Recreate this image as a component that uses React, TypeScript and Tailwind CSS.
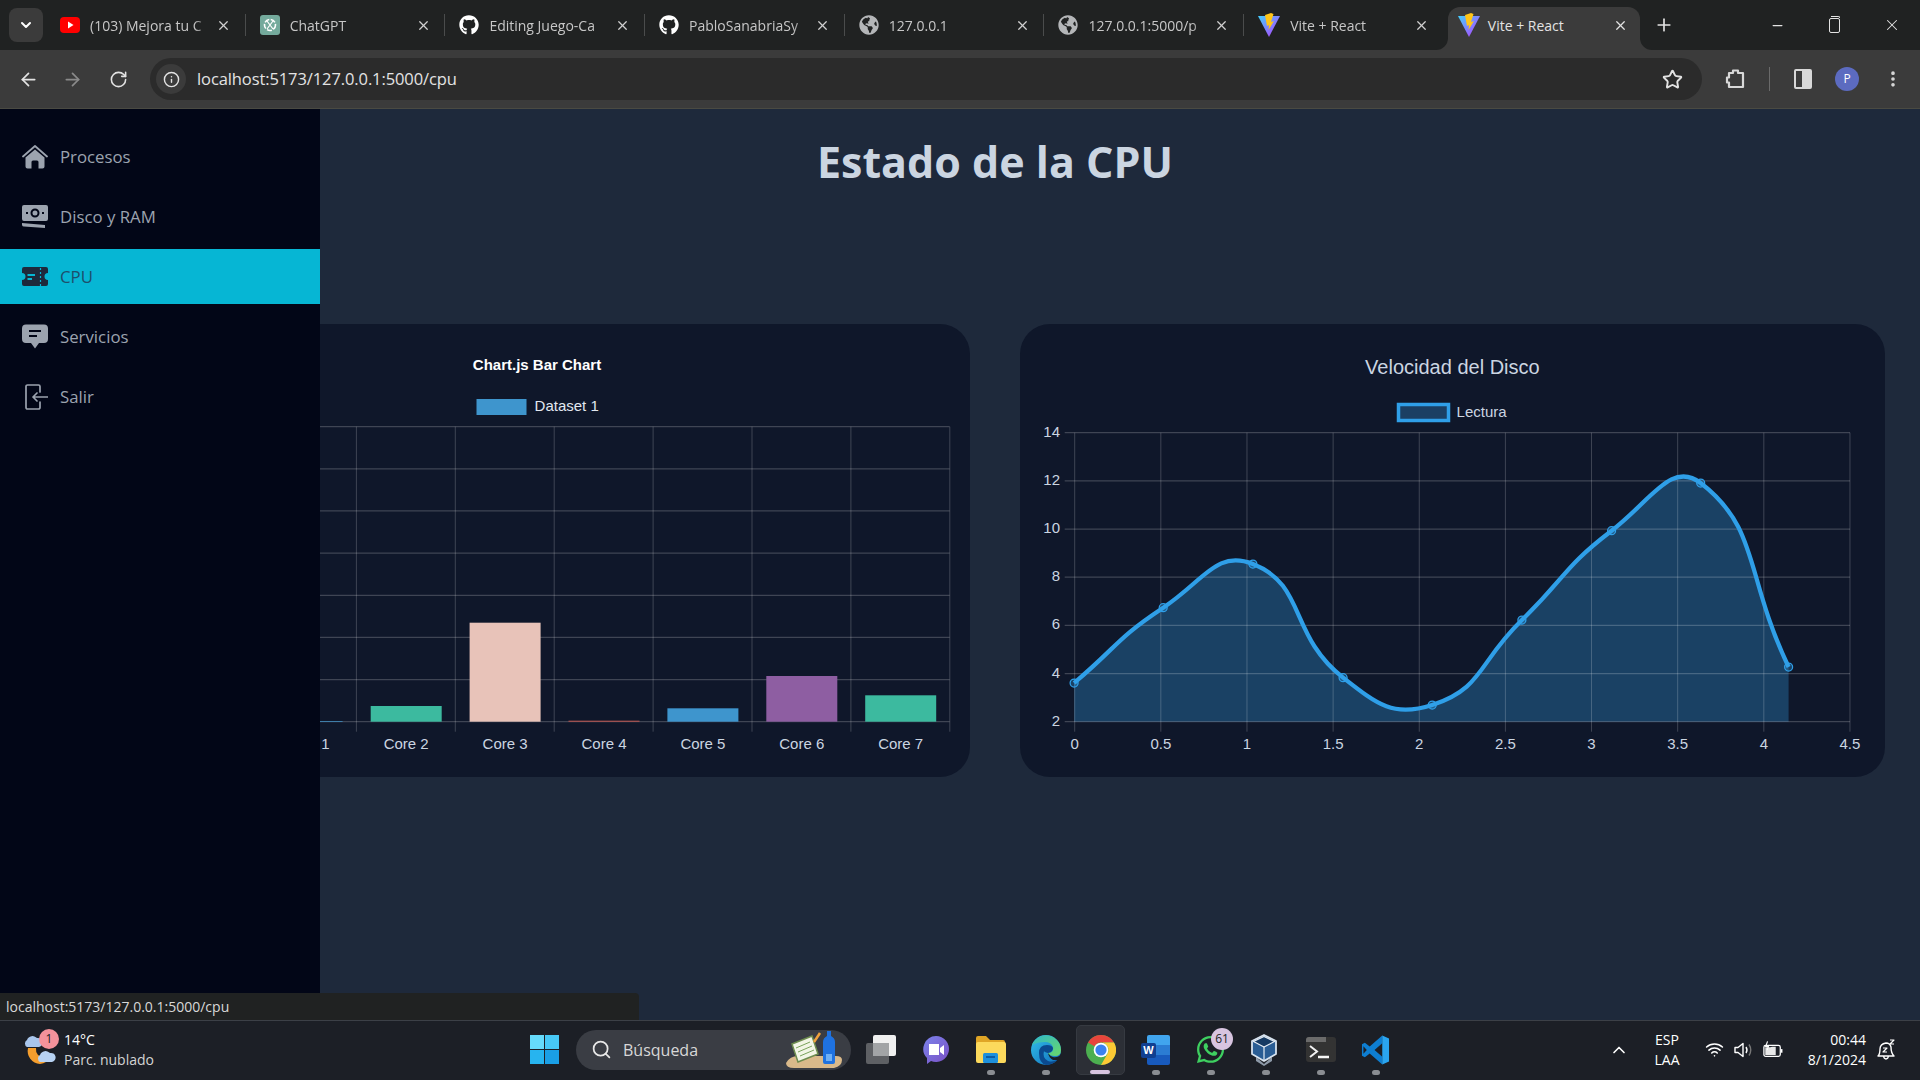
import { ArrowLeft, ArrowRight, ChevronDown, ChevronUp, Info, Minus, MoreVertical, Plus, RotateCw, Search, Star, Wifi, X } from "lucide-react";
import { FaGithub, FaGlobeAmericas, FaWhatsapp } from "react-icons/fa";

const sans = "font-['Open_Sans',sans-serif]";

function YoutubeIcon() {
    return (
        <svg viewBox="0 0 20 20" className="w-5 h-5 shrink-0">
            <rect x="0" y="2" width="20" height="16" rx="4" fill="#f00" />
            <path d="M8 6.5 L13.5 10 L8 13.5 Z" fill="#fff" />
        </svg>
    );
}

function GptIcon() {
    return (
        <svg viewBox="0 0 20 20" className="w-5 h-5 shrink-0">
            <rect width="20" height="20" rx="3" fill="#74aa9c" />
            <circle cx="10" cy="10" r="5.5" fill="none" stroke="#fff" strokeWidth="1.6" strokeDasharray="5 1.5" />
            <path d="M7 6 L13 14 M13 6 L7 14" stroke="#fff" strokeWidth="1.2" />
        </svg>
    );
}

function ViteIcon() {
    return (
        <svg viewBox="0 0 22 24" className="w-[22px] h-6 shrink-0">
            <defs>
                <linearGradient id="viteA" x1="0" y1="0" x2="1" y2="1">
                    <stop offset="0" stopColor="#41d1ff" />
                    <stop offset="1" stopColor="#bd34fe" />
                </linearGradient>
            </defs>
            <path d="M0 3 L22 3 L11 24 Z" fill="url(#viteA)" />
            <path d="M13 0 L7 2 L9 13 L11 12 L10.5 17 L16 8 L13 9 L15.5 1 Z" fill="#ffc517" />
        </svg>
    );
}

const tabs = [
    { title: "(103) Mejora tu C", icon: <YoutubeIcon /> },
    { title: "ChatGPT", icon: <GptIcon /> },
    { title: "Editing Juego-Ca", icon: <FaGithub className="w-5 h-5 shrink-0 text-white" /> },
    { title: "PabloSanabriaSy", icon: <FaGithub className="w-5 h-5 shrink-0 text-white" /> },
    { title: "127.0.0.1", icon: <FaGlobeAmericas className="w-5 h-5 shrink-0 text-[#b4b6b8]" /> },
    { title: "127.0.0.1:5000/p", icon: <FaGlobeAmericas className="w-5 h-5 shrink-0 text-[#b4b6b8]" /> },
    { title: "Vite + React", icon: <ViteIcon /> },
];

function TabBar() {
    return (
        <div className="h-[50px] bg-[#202222] flex items-start shrink-0">
            <div className="ml-[9px] mt-[8px] w-[34px] h-[34px] rounded-lg bg-[#3b3b3b] flex items-center justify-center text-white">
                <ChevronDown size={16} strokeWidth={3} />
            </div>
            <div className="ml-[3px] flex">
                {tabs.map((t, i) => (
                    <div key={i} className="w-[199.7px] h-[50px] pl-[14px] flex items-center relative">
                        {t.icon}
                        <span className="ml-[10px] w-[122px] whitespace-nowrap text-[14px] text-[#c7c7c7] [mask-image:linear-gradient(to_right,black_85%,transparent)]">{t.title}</span>
                        <X size={15} className="absolute left-[170px] text-[#d0d0d0]" />
                        {i < 6 && <div className="absolute right-0 top-[14px] w-px h-[22px] bg-[#4a4c4c]" />}
                    </div>
                ))}
            </div>
            <div className="ml-[4px] mt-[7px] w-[192px] h-[43px] bg-[#3b3b3b] rounded-t-[12px] pl-[10px] pb-[7px] flex items-center relative">
                <svg viewBox="0 0 12 12" className="absolute w-3 h-3 -left-3 bottom-0"><path d="M12 0 V12 H0 A12 12 0 0 0 12 0 Z" fill="#3b3b3b" /></svg>
                <svg viewBox="0 0 12 12" className="absolute w-3 h-3 -right-3 bottom-0"><path d="M0 0 V12 H12 A12 12 0 0 1 0 0 Z" fill="#3b3b3b" /></svg>
                <ViteIcon />
                <span className="ml-[8px] text-[14px] text-[#e3e3e3] whitespace-nowrap">Vite + React</span>
                <X size={15} className="absolute left-[165px] text-[#e3e3e3]" />
            </div>
            <div className="ml-[9px] h-[50px] w-[30px] flex items-center justify-center text-[#e3e3e3]">
                <Plus size={20} />
            </div>
            <div className="ml-auto flex h-[50px] items-center text-[#e3e3e3]">
                <div className="w-[57px] flex justify-center"><Minus size={15} /></div>
                <div className="w-[57px] flex justify-center">
                    <div className="relative w-[11px] h-[15px] border border-[#e3e3e3] rounded-[2px]">
                        <div className="absolute -top-[3px] left-[1px] w-[9px] h-[2px] border-t border-r border-[#e3e3e3] rounded-tr-[2px]" />
                    </div>
                </div>
                <div className="w-[57px] flex justify-center"><X size={18} strokeWidth={1.4} /></div>
            </div>
        </div>
    );
}

function Toolbar() {
    return (
        <div className="h-[59px] border-b border-[#4a4a42] bg-[#3b3b3b] flex items-center shrink-0">
            <div className="ml-[10px] w-[36px] flex justify-center text-[#e3e3e3]"><ArrowLeft size={21} /></div>
            <div className="ml-[8px] w-[36px] flex justify-center text-[#8a8a8a]"><ArrowRight size={21} /></div>
            <div className="ml-[10px] w-[36px] flex justify-center text-[#e3e3e3]"><RotateCw size={19} /></div>
            <div className="ml-[14px] w-[1552px] h-[42px] bg-[#2b2b2b] rounded-full flex items-center pl-[6px] pr-[19px]">
                <div className="w-[30px] h-[30px] rounded-full bg-[#3b3b3b] flex items-center justify-center text-[#e3e3e3]">
                    <Info size={17} />
                </div>
                <span className="ml-[11px] text-[16.5px] tracking-[-0.1px] text-[#e3e3e3]">localhost:5173/127.0.0.1:5000/cpu</span>
                <Star size={21} className="ml-auto text-[#e3e3e3]" strokeWidth={2.2} />
            </div>
            <div className="ml-[22px] w-[24px] flex justify-center">
                <svg viewBox="0 0 24 24" className="w-6 h-6" fill="none" stroke="#d8d8d8" strokeWidth="2.2">
                    <path d="M5 6 H9 V3.5 H14 V6 H19 V20 H5 V15.5 H3 V10.5 H5 Z" strokeLinejoin="round" />
                </svg>
            </div>
            <div className="ml-[21px] w-px h-[24px] bg-[#6a6a6a]" />
            <div className="ml-[21px] w-[24px] flex justify-center">
                <div className="w-[18px] h-[20px] border-2 border-[#d8d8d8] rounded-[2px] flex justify-end">
                    <div className="w-[8px] bg-[#d8d8d8]" />
                </div>
            </div>
            <div className="ml-[20px] w-[24px] h-[24px] rounded-full bg-[#5c6bc0] flex items-center justify-center text-[12px] text-white">P</div>
            <div className="ml-[24px] w-[20px] flex justify-center text-[#d8d8d8]"><MoreVertical size={20} strokeWidth={2.4} /></div>
        </div>
    );
}

function HomeIcon() {
    return (
        <svg viewBox="0 0 26 26" className="w-[26px] h-[26px] fill-current">
            <path d="M1 12.5 L13 2 L25 12.5" fill="none" stroke="currentColor" strokeWidth="1.8" strokeLinecap="round" strokeLinejoin="round" />
            <path d="M13 5.5 L22.5 13.5 V22.5 A2 2 0 0 1 20.5 24.5 H16.5 V18 A1.5 1.5 0 0 0 15 16.5 H11 A1.5 1.5 0 0 0 9.5 18 V24.5 H5.5 A2 2 0 0 1 3.5 22.5 V13.5 Z" />
        </svg>
    );
}

function DiscIcon() {
    return (
        <svg viewBox="0 0 26 26" className="w-[26px] h-[26px] fill-current">
            <path fillRule="evenodd" d="M2 1 H24 A2 2 0 0 1 26 3 V15 A2 2 0 0 1 24 17 H2 A2 2 0 0 1 0 15 V3 A2 2 0 0 1 2 1 Z M13 4.5 A4.5 4.5 0 1 0 13 13.5 A4.5 4.5 0 1 0 13 4.5 Z M13 6.5 A2.5 2.5 0 1 1 13 11.5 A2.5 2.5 0 1 1 13 6.5 Z M4 8 V10 H6 V8 Z M20 8 V10 H22 V8 Z" />
            <path d="M0 19 L23 21 V24 L2 22.5 A2 2 0 0 1 0 21 Z" />
        </svg>
    );
}

function TicketIcon() {
    return (
        <svg viewBox="0 0 26 20" className="w-[26px] h-[20px]">
            <path className="fill-[#1e293b]" d="M2 0 H24 A2 2 0 0 1 26 2 V6 A3 3 0 0 0 26 13 V17 A2 2 0 0 1 24 19 H2 A2 2 0 0 1 0 17 V13 A3 3 0 0 0 0 6 V2 A2 2 0 0 1 2 0 Z" />
            <path d="M18.5 1 V19" stroke="#06b6d4" strokeWidth="1.2" strokeDasharray="2 2" />
            <path d="M5.5 8 H13 M5.5 12 H10" stroke="#06b6d4" strokeWidth="1.8" />
        </svg>
    );
}

function ChatIcon() {
    return (
        <svg viewBox="0 0 26 26" className="w-[26px] h-[26px] fill-current">
            <path fillRule="evenodd" d="M4 0.5 H22 A4 4 0 0 1 26 4.5 V15 A4 4 0 0 1 22 19 H17 L13 24.5 L9 19 H4 A4 4 0 0 1 0 15 V4.5 A4 4 0 0 1 4 0.5 Z M7 6 V8 H19 V6 Z M7 11 V13 H15 V11 Z" />
        </svg>
    );
}

function ExitIcon() {
    return (
        <svg viewBox="0 0 26 26" className="w-[26px] h-[26px]" fill="none" stroke="currentColor" strokeWidth="1.7" strokeLinecap="round" strokeLinejoin="round">
            <path d="M18 8 V2.5 A1.5 1.5 0 0 0 16.5 1 H5.5 A1.5 1.5 0 0 0 4 2.5 V23.5 A1.5 1.5 0 0 0 5.5 25 H16.5 A1.5 1.5 0 0 0 18 23.5 V18" />
            <path d="M26 13 H11 M15 9 L11 13 L15 17" />
        </svg>
    );
}

const menu = [
    { label: "Procesos", icon: <HomeIcon /> },
    { label: "Disco y RAM", icon: <DiscIcon /> },
    { label: "CPU", icon: <TicketIcon />, active: true },
    { label: "Servicios", icon: <ChatIcon /> },
    { label: "Salir", icon: <ExitIcon /> },
];

function Sidebar() {
    return (
        <aside className="absolute inset-y-0 left-0 w-[320px] bg-[#020617] pt-[20px] flex flex-col gap-[5px]">
            {menu.map((m) => (
                <div key={m.label} className={`h-[55px] pl-[22px] flex items-center ${m.active ? "bg-[#06b6d4] text-[#1e4e6b]" : "text-[#9ca3af]"}`}>
                    <span className="w-[26px] flex justify-center">{m.icon}</span>
                    <span className="ml-[12px] text-[16.8px]">{m.label}</span>
                </div>
            ))}
        </aside>
    );
}

const gridStroke = "rgba(255,255,255,0.2)";

const barItems = [
    { label: "Core 1", x: 166.6, top: 397, color: "#3e95cd" },
    { label: "Core 2", x: 265.7, top: 382, color: "#3cba9f" },
    { label: "Core 3", x: 364.6, top: 298.7, color: "#e8c3b9" },
    { label: "Core 4", x: 463.5, top: 396.7, color: "#c45850" },
    { label: "Core 5", x: 562.4, top: 384.3, color: "#3e95cd" },
    { label: "Core 6", x: 661.3, top: 352, color: "#8e5ea2" },
    { label: "Core 7", x: 760.2, top: 371.3, color: "#3cba9f" },
];

function BarChart() {
    const base = 397.7;
    return (
        <svg viewBox="0 0 865 452" className="w-[865px] h-[452px] font-['Liberation_Sans',Arial,sans-serif]">
            <text x="432" y="42" textAnchor="middle" dominantBaseline="middle" fontSize="15" fontWeight="700" fill="#fff">Chart.js Bar Chart</text>
            <rect x="371.5" y="75" width="50" height="16" fill="#3e95cd" />
            <text x="429.6" y="83" dominantBaseline="middle" fontSize="15" fill="#e2e8f0">Dataset 1</text>
            {[0, 1, 2, 3, 4, 5, 6, 7].map((j) => (
                <line key={j} x1="60" x2="844.6" y1={102.7 + j * 42.14} y2={102.7 + j * 42.14} stroke={gridStroke} strokeWidth="1.25" />
            ))}
            {[-1, 0, 1, 2, 3, 4, 5, 6].map((i) => (
                <line key={i} x1={251.4 + i * 98.9} x2={251.4 + i * 98.9} y1="102.7" y2="407.7" stroke={gridStroke} strokeWidth="1" />
            ))}
            {barItems.map((b) => (
                <g key={b.label}>
                    <rect x={b.x} y={b.top} width="71" height={base - b.top} fill={b.color} />
                    <text x={b.x + 35.5} y="421" textAnchor="middle" dominantBaseline="middle" fontSize="15" fill="#cbd5e1">{b.label}</text>
                </g>
            ))}
        </svg>
    );
}

const linePts: [number, number][] = [
    [54.1, 359], [143.2, 283.7], [232.9, 240], [323.1, 353.7], [412.2, 381], [501.9, 296], [591.6, 206.7], [680.7, 159], [768.6, 343],
];

// same spline chart.js draws, the tension here is a bit over its usual 0.4
function splinePath(pts: [number, number][], t = 0.5) {
    const ctrl = pts.map((p, i) => {
        const prev = pts[i - 1] ?? p;
        const next = pts[i + 1] ?? p;
        const d01 = Math.hypot(p[0] - prev[0], p[1] - prev[1]);
        const d12 = Math.hypot(next[0] - p[0], next[1] - p[1]);
        const s01 = d01 / (d01 + d12);
        const s12 = d12 / (d01 + d12);
        return {
            in: [p[0] - t * s01 * (next[0] - prev[0]), p[1] - t * s01 * (next[1] - prev[1])],
            out: [p[0] + t * s12 * (next[0] - prev[0]), p[1] + t * s12 * (next[1] - prev[1])],
        };
    });
    let d = `M${pts[0][0]} ${pts[0][1]}`;
    for (let i = 1; i < pts.length; i++) {
        d += ` C${ctrl[i - 1].out[0]} ${ctrl[i - 1].out[1]} ${ctrl[i].in[0]} ${ctrl[i].in[1]} ${pts[i][0]} ${pts[i][1]}`;
    }
    return d;
}

function LineChart() {
    const d = splinePath(linePts);
    const base = 397.7;
    const xLabels = ["0", "0.5", "1", "1.5", "2", "2.5", "3", "3.5", "4", "4.5"];
    const yLabels = ["14", "12", "10", "8", "6", "4", "2"];
    return (
        <svg viewBox="0 0 865 452" className="w-[865px] h-[452px] font-['Liberation_Sans',Arial,sans-serif]">
            <text x="432.4" y="45" textAnchor="middle" dominantBaseline="middle" fontSize="20" fill="#cbd5e1">Velocidad del Disco</text>
            <rect x="378.5" y="80.5" width="50" height="16" fill="#1b3f63" stroke="#2f9fe8" strokeWidth="3.5" />
            <text x="436.6" y="89" dominantBaseline="middle" fontSize="15" fill="#cbd5e1">Lectura</text>
            <path d={`${d} L768.6 ${base} L54.1 ${base} Z`} fill="rgba(54,162,235,0.3)" />
            {yLabels.map((l, j) => (
                <g key={l}>
                    <line x1="44.7" x2="830" y1={108.7 + j * 48.17} y2={108.7 + j * 48.17} stroke={gridStroke} strokeWidth="1.25" />
                    <text x="40" y={108.7 + j * 48.17} textAnchor="end" dominantBaseline="middle" fontSize="15" fill="#cbd5e1">{l}</text>
                </g>
            ))}
            {xLabels.map((l, i) => (
                <g key={l}>
                    <line x1={54.7 + i * 86.14} x2={54.7 + i * 86.14} y1="108.7" y2="407.7" stroke={gridStroke} strokeWidth="1" />
                    <text x={54.7 + i * 86.14} y="421" textAnchor="middle" dominantBaseline="middle" fontSize="15" fill="#cbd5e1">{l}</text>
                </g>
            ))}
            <path d={d} fill="none" stroke="#2f9fe8" strokeWidth="4.25" />
            {linePts.map((p, i) => (
                <circle key={i} cx={p[0]} cy={p[1]} r="4" fill="rgba(54,162,235,0.3)" stroke="#2f9fe8" strokeWidth="1.25" />
            ))}
        </svg>
    );
}

function WeatherIcon() {
    return (
        <svg viewBox="0 0 32 30" className="w-8 h-[30px] shrink-0">
            <path d="M4 13 A13 13 0 0 0 16 29 A12 12 0 0 0 26 22 A14 14 0 0 1 14 20 A9 9 0 0 1 12 13 Z" fill="#f59e2d" />
            <path d="M3 12 A4 4 0 0 1 3 5 A6 6 0 0 1 13 3 A4.5 4.5 0 0 1 15 12 Z" fill="#a9c6ec" />
            <path d="M16 27 A4 4 0 0 1 16 20 A6 6 0 0 1 26 18 A4.5 4.5 0 0 1 28 27 Z" fill="#b7d2f3" />
        </svg>
    );
}

function WinLogo() {
    return (
        <div className="grid grid-cols-2 gap-[1.5px] w-[29px] h-[29px]">
            <div className="bg-[#66dbfb]" />
            <div className="bg-[#47c8f6]" />
            <div className="bg-[#27b4ef]" />
            <div className="bg-[#1a9fe6]" />
        </div>
    );
}

function SearchArt() {
    return (
        <svg viewBox="0 0 56 40" className="w-[56px] h-[40px]">
            <path d="M0 33 Q4 26 12 26 H50 Q56 26 56 30 Q56 36 48 38 H8 Q0 38 0 33 Z" fill="#d9b98a" />
            <path d="M6 14 L26 6 L32 24 L12 32 Z" fill="#f2f5e6" stroke="#6d8c4e" strokeWidth="1.5" />
            <path d="M10 18 L24 12 M12 22 L26 16 M14 26 L28 20" stroke="#7aa35c" strokeWidth="1" />
            <path d="M28 12 L34 3" stroke="#f0a23c" strokeWidth="2.5" />
            <path d="M37 12 Q37 8 41 6 V1 H45 V6 Q49 8 49 12 V32 Q49 34 47 34 H39 Q37 34 37 32 Z" fill="#1f72e0" />
            <path d="M40 24 H46 V31 H40 Z" fill="#6fb0f5" />
        </svg>
    );
}

function TaskView() {
    return (
        <div className="relative w-[30px] h-[29px]">
            <div className="absolute left-[0px] top-[8px] w-[23px] h-[21px] bg-[#5e6064] rounded-[2px]" />
            <div className="absolute right-[0px] top-[0px] w-[23px] h-[21px] bg-[#f0f0f0] rounded-[2px]" />
            <div className="absolute left-[7px] top-[8px] w-[16px] h-[13px] bg-[#a2a4a6]" />
        </div>
    );
}

function MeetIcon() {
    return (
        <svg viewBox="0 0 28 30" className="w-7 h-[30px]">
            <defs>
                <linearGradient id="meetG" x1="0" y1="0" x2="1" y2="1">
                    <stop offset="0" stopColor="#7b83eb" />
                    <stop offset="1" stopColor="#7a4fc4" />
                </linearGradient>
            </defs>
            <path d="M14 1 A13 13 0 1 1 9 26 L5 29 V23 A13 13 0 0 1 14 1 Z" fill="url(#meetG)" />
            <path d="M7 9 H17 V20 H7 Z M18 13 L22 10 V20 L18 17 Z" fill="#fff" />
        </svg>
    );
}

function FolderIcon() {
    return (
        <svg viewBox="0 0 31 27" className="w-[31px] h-[27px]">
            <path d="M1 2 A2 2 0 0 1 3 0 H11 L15 4 H28 A2 2 0 0 1 30 6 V9 H1 Z" fill="#e0a526" />
            <rect x="1" y="6" width="30" height="21" rx="2" fill="#fcd95c" />
            <rect x="8" y="17" width="15" height="10" rx="1.5" fill="#1e90dc" />
            <rect x="11" y="20" width="9" height="2" fill="#0c5da6" />
        </svg>
    );
}

function EdgeIcon() {
    return (
        <svg viewBox="0 0 30 30" className="w-[30px] h-[30px]">
            <defs>
                <linearGradient id="edgeB" x1="0" y1="0" x2="1" y2="1">
                    <stop offset="0" stopColor="#33c1e8" />
                    <stop offset="1" stopColor="#0f6cbd" />
                </linearGradient>
                <linearGradient id="edgeG" x1="0" y1="0" x2="1" y2="1">
                    <stop offset="0" stopColor="#2fb8c8" />
                    <stop offset="1" stopColor="#6ad86a" />
                </linearGradient>
            </defs>
            <circle cx="15" cy="15" r="15" fill="url(#edgeB)" />
            <path d="M1 10 A15 15 0 0 1 30 15 Q30 21 24 21 Q18 21 17 18 Q23 18 22 12 Q20 7 14 7 Q6 7 1 10 Z" fill="url(#edgeG)" />
            <path d="M8 18 Q8 10 16 10 Q21 10 22 13 Q22 17 17 18 Q13 17 13 16 Q11 23 17 26 Q23 28 28 23 Q23 30 15 30 Q8 28 8 18 Z" fill="#0b4a8f" />
            <path d="M30 19 Q27 23 22 22 Q19 21 17 18 Q18 23 22 25 L30 25 Z" fill="#1c1f26" />
        </svg>
    );
}

function ChromeIcon() {
    return (
        <svg viewBox="0 0 30 30" className="w-[30px] h-[30px]">
            <circle cx="15" cy="15" r="15" fill="#4caf50" />
            <path d="M15 0 A15 15 0 0 1 28 7.5 H15 A7.5 7.5 0 0 0 8.5 11.3 L2 7.5 A15 15 0 0 1 15 0 Z" fill="#e8453c" />
            <path d="M28 7.5 A15 15 0 0 1 15 30 L21.5 18.7 A7.5 7.5 0 0 0 15 7.5 Z" fill="#fcc934" />
            <circle cx="15" cy="15" r="7.3" fill="#fff" />
            <circle cx="15" cy="15" r="5.6" fill="#3b82f0" />
        </svg>
    );
}

function WordIcon() {
    return (
        <div className="relative w-[29px] h-[30px]">
            <div className="absolute right-0 top-0 w-[23px] h-[30px] rounded-[2px] overflow-hidden flex flex-col">
                <div className="flex-1 bg-[#41a5ee]" />
                <div className="flex-1 bg-[#2b7cd3]" />
                <div className="flex-1 bg-[#185abd]" />
            </div>
            <div className="absolute left-0 top-[8px] w-[15px] h-[15px] bg-[#103f91] rounded-[2px] flex items-center justify-center text-[11px] font-bold text-white font-['Liberation_Sans',sans-serif]">W</div>
        </div>
    );
}

function BoxIcon() {
    return (
        <svg viewBox="0 0 26 32" className="w-[26px] h-8 mr-[3px]">
            <path d="M5 23 L13 30 L21 23 V27 L13 32 L5 27 Z" fill="#8d99a8" />
            <path d="M13 1 L25 7 V20 L13 27 L1 20 V7 Z" fill="#2a5d94" stroke="#d7e2ee" strokeWidth="1.8" strokeLinejoin="round" />
            <path d="M13 2.5 L23.5 7.5 L13 13 L2.5 7.5 Z" fill="#163a63" stroke="#e8eef5" strokeWidth="1.2" strokeLinejoin="round" />
            <path d="M13 13 V26" stroke="#e8eef5" strokeWidth="1.2" />
        </svg>
    );
}

function TerminalIcon() {
    return (
        <div className="w-[30px] h-[25px] rounded-[3px] bg-[#333] relative overflow-hidden">
            <div className="h-[5px] bg-[#6b6b6b] w-[20px]" />
            <svg viewBox="0 0 30 20" className="w-[30px] h-[20px]">
                <path d="M4 4 L11 9.5 L4 15" stroke="#f0f0f0" strokeWidth="2" fill="none" />
                <path d="M12 15 H23" stroke="#f5f5f5" strokeWidth="2.5" />
            </svg>
        </div>
    );
}

function CodeIcon() {
    return (
        <svg viewBox="0 0 30 30" className="w-[29px] h-[30px]">
            <path fillRule="evenodd" fill="#0e7ed1" d="M22 0 L9 11.5 L4 7.5 L1 9 V21 L4 22.5 L9 18.5 L22 30 L22 22 L14 15 L22 8 Z M2.5 11 L6 15 L2.5 19 Z" />
            <path fill="#2aa5f0" d="M22 0 L29 3 V27 L22 30 Z" />
        </svg>
    );
}

const taskItems = [
    { icon: <TaskView />, dot: false },
    { icon: <MeetIcon />, dot: false },
    { icon: <FolderIcon />, dot: true },
    { icon: <EdgeIcon />, dot: true },
    { icon: <ChromeIcon />, dot: false, active: true },
    { icon: <WordIcon />, dot: true },
    { icon: <FaWhatsapp className="w-[31px] h-[31px] text-[#3ecf60]" />, dot: true, badge: "61" },
    { icon: <BoxIcon />, dot: true },
    { icon: <TerminalIcon />, dot: true },
    { icon: <CodeIcon />, dot: true },
];

function Taskbar() {
    return (
        <div className="h-[60px] pb-[2px] bg-[#1c1f26] border-t border-[#3c4047] flex items-center shrink-0 text-white">
            <div className="w-[517px] pl-[24px] flex items-center">
                <div className="relative">
                    <WeatherIcon />
                    <div className="absolute left-[15px] -top-[6px] w-[20px] h-[20px] rounded-full bg-[#f4929b] text-[#1c1f26] text-[12px] flex items-center justify-center">1</div>
                </div>
                <div className="ml-[8px] flex flex-col text-[14px] leading-[20px]">
                    <span>14°C</span>
                    <span className="text-[#d4d4d4]">Parc. nublado</span>
                </div>
            </div>
            <div className="w-[55px] flex justify-center"><WinLogo /></div>
            <div className="ml-[4px] w-[275px] h-[40px] rounded-full bg-[#3a3d44] flex items-center pl-[15px] pr-[9px]">
                <Search size={21} className="text-[#e8e8e8]" />
                <span className="ml-[11px] text-[16px] text-[#d8d8d8]">Búsqueda</span>
                <span className="ml-auto flex"><SearchArt /></span>
            </div>
            <div className="ml-[2px] flex">
                {taskItems.map((it, i) => (
                    <div key={i} className="relative w-[55px] h-[57px] flex items-center justify-center">
                        {it.active && <div className="absolute left-[3px] top-[4px] w-[49px] h-[50px] rounded-[5px] bg-[#2c2f36] border border-[#363a41]" />}
                        <div className="relative">{it.icon}</div>
                        {it.dot && <div className="absolute bottom-[3px] left-[24px] w-[8px] h-[5px] rounded-full bg-[#8a8d92]" />}
                        {it.active && <div className="absolute bottom-[4px] left-[17px] w-[20px] h-[4px] rounded-full bg-[#d8c4e0]" />}
                        {it.badge && <div className="absolute right-[5px] top-[7px] w-[22px] h-[22px] rounded-full bg-[#d8c4e0] text-[#1c1f26] text-[12px] flex items-center justify-center">{it.badge}</div>}
                    </div>
                ))}
            </div>
            <div className="ml-[206px] w-[20px] flex justify-center"><ChevronUp size={20} /></div>
            <div className="ml-[18px] w-[40px] flex flex-col items-center text-[14px] leading-[20px]">
                <span>ESP</span>
                <span>LAA</span>
            </div>
            <div className="ml-[17px] w-[20px] flex justify-center"><Wifi size={19} /></div>
            <div className="ml-[9px] w-[20px] flex justify-center">
                <svg viewBox="0 0 20 20" className="w-5 h-5" fill="none" stroke="#fff" strokeWidth="1.4" strokeLinejoin="round">
                    <path d="M2 7.5 H5 L10 3.5 V16.5 L5 12.5 H2 Z" />
                    <path d="M13 7 Q15 10 13 13" />
                    <path d="M16 4.5 Q19.5 10 16 15.5" stroke="#777" />
                </svg>
            </div>
            <div className="ml-[10px] w-[20px] flex justify-center">
                <svg viewBox="0 0 22 20" className="w-[22px] h-5" fill="none" stroke="#fff" strokeWidth="1.4">
                    <rect x="1" y="5" width="18" height="12" rx="2" />
                    <path d="M2.5 15.5 V7 H8 L10 6.5 H14 V15.5 Z" fill="#e8e8e8" stroke="none" />
                    <path d="M20.5 9 V13" strokeWidth="1.8" />
                    <path d="M5 0.5 L3 6 H6 L4.5 10" stroke="#fff" strokeWidth="1.3" />
                </svg>
            </div>
            <div className="ml-[13px] w-[70px] flex flex-col items-end text-[14px] leading-[20px]">
                <span>00:44</span>
                <span>8/1/2024</span>
            </div>
            <div className="ml-[10px] w-[20px] flex justify-center">
                <svg viewBox="0 0 20 22" className="w-5 h-[22px]" fill="none" stroke="#fff" strokeWidth="1.4" strokeLinejoin="round">
                    <path d="M2 17 Q4 15 4 10 Q4 5 10 4 Q14 4 15 8 Q15 14 18 17 Z M7.5 17 Q8 20 10 20 Q12 20 12.5 17" />
                    <path d="M7 9 H11 L7 13 H11" strokeWidth="1.2" />
                    <path d="M14 1 H18 L14 5 H18" strokeWidth="1.2" />
                </svg>
            </div>
        </div>
    );
}

export default function App() {
    return (
        <div className={`w-screen h-screen overflow-hidden flex flex-col ${sans}`}>
            <TabBar />
            <Toolbar />
            <main className="relative flex-1 bg-[#1e293b] pl-[105px] pr-[35px]">
                <h1 className="pt-[23px] h-[83px] text-center text-[43px] leading-[60px] font-bold text-[#cbd5e1]">Estado de la CPU</h1>
                <div className="mt-[132px] flex gap-[50px]">
                    <div className="w-[865px] h-[453px] rounded-[30px] bg-[#0f172a] overflow-hidden"><BarChart /></div>
                    <div className="w-[865px] h-[453px] rounded-[30px] bg-[#0f172a] overflow-hidden"><LineChart /></div>
                </div>
                <Sidebar />
                <div className="absolute left-0 bottom-0 w-[639px] h-[27px] bg-[#202222] rounded-tr-[4px] pl-[6px] flex items-center text-[14px] text-[#d8d8d8]">localhost:5173/127.0.0.1:5000/cpu</div>
            </main>
            <Taskbar />
        </div>
    );
}
